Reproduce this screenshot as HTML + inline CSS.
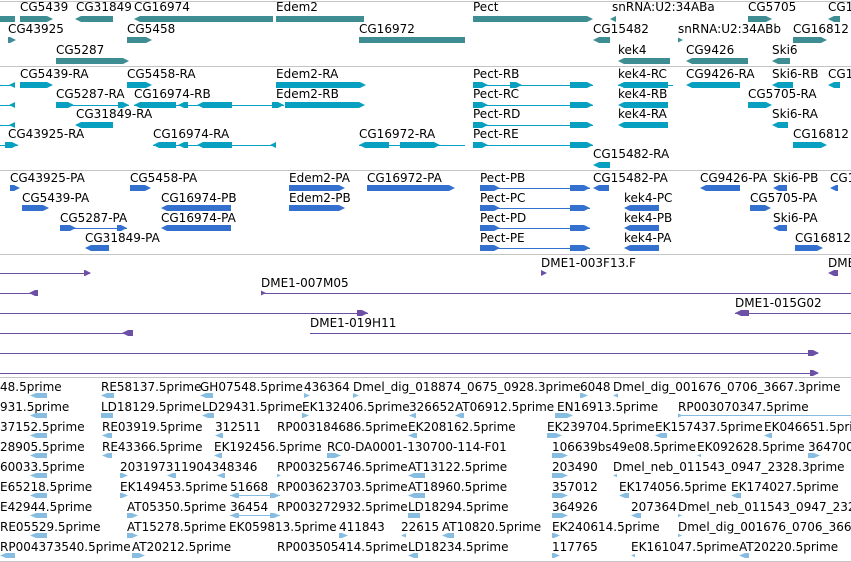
<!DOCTYPE html>
<html><head><meta charset="utf-8"><style>
html,body{margin:0;padding:0;width:851px;height:562px;overflow:hidden;background:#fff;position:relative}
.l{position:absolute;font:12px/14px "DejaVu Sans","Liberation Sans",sans-serif;white-space:nowrap;color:#000}
.s{position:absolute;left:0;width:851px;height:1px;background:#c4c4c4}
.b{position:absolute;height:6px}
.r{clip-path:polygon(0 0,calc(100% - 6px) 0,100% 50%,calc(100% - 6px) 100%,0 100%)}
.f{clip-path:polygon(6px 0,100% 0,100% 100%,6px 100%,0 50%)}
.g{background:#3e8d93}
.t{background:#08a0c1}
.p{background:#3470ce}
.c{background:#6c50a6}
.e{background:#86bde1;height:5px}
.n{position:absolute;height:1px}
</style></head><body>
<div class="s" style="top:1px"></div>
<div class="s" style="top:66px"></div>
<div class="s" style="top:170px"></div>
<div class="s" style="top:254px"></div>
<div class="s" style="top:377px"></div>
<div class="s" style="top:561px"></div>

<!-- genes -->
<div class="l" style="left:20px;top:0">CG5439</div><div class="l" style="left:76px;top:0">CG31849</div><div class="l" style="left:134px;top:0">CG16974</div><div class="l" style="left:276px;top:0">Edem2</div><div class="l" style="left:473px;top:0">Pect</div><div class="l" style="left:612px;top:0">snRNA:U2:34ABa</div><div class="l" style="left:748px;top:0">CG5705</div><div class="l" style="left:828px;top:0">CG1</div>
<div class="b g" style="left:0;top:16px;width:15px"></div><div class="b g r" style="left:20px;top:16px;width:33px"></div><div class="b g f" style="left:75px;top:16px;width:38px"></div><div class="b g f" style="left:134px;top:16px;width:139px"></div><div class="b g" style="left:276px;top:16px;width:88px"></div><div class="b g r" style="left:473px;top:16px;width:120px"></div><div class="b g f" style="left:610px;top:16px;width:6px"></div><div class="b g r" style="left:748px;top:16px;width:24px"></div><div class="b g f" style="left:828px;top:16px;width:12px"></div>
<div class="l" style="left:8px;top:22px">CG43925</div><div class="l" style="left:127px;top:22px">CG5458</div><div class="l" style="left:359px;top:22px">CG16972</div><div class="l" style="left:593px;top:22px">CG15482</div><div class="l" style="left:678px;top:22px">snRNA:U2:34ABb</div><div class="l" style="left:793px;top:22px">CG16812</div>
<div class="b g r" style="left:8px;top:37px;width:8px"></div><div class="b g r" style="left:127px;top:37px;width:25px"></div><div class="b g" style="left:359px;top:37px;width:106px"></div><div class="b g f" style="left:593px;top:37px;width:17px"></div><div class="b g r" style="left:678px;top:37px;width:5px"></div><div class="b g r" style="left:793px;top:37px;width:34px"></div>
<div class="l" style="left:56px;top:43px">CG5287</div><div class="l" style="left:618px;top:43px">kek4</div><div class="l" style="left:686px;top:43px">CG9426</div><div class="l" style="left:772px;top:43px">Ski6</div>
<div class="b g r" style="left:56px;top:58px;width:73px"></div><div class="b g f" style="left:618px;top:58px;width:52px"></div><div class="b g f" style="left:686px;top:58px;width:62px"></div><div class="b g f" style="left:772px;top:58px;width:18px"></div>

<!-- transcripts -->
<div class="l" style="left:20px;top:67px">CG5439-RA</div><div class="l" style="left:127px;top:67px">CG5458-RA</div><div class="l" style="left:276px;top:67px">Edem2-RA</div><div class="l" style="left:473px;top:67px">Pect-RB</div><div class="l" style="left:618px;top:67px">kek4-RC</div><div class="l" style="left:686px;top:67px">CG9426-RA</div><div class="l" style="left:772px;top:67px">Ski6-RB</div><div class="l" style="left:828px;top:67px">CG1</div>
<div class="n t" style="left:0;top:85px;width:15px"></div><div class="b t f" style="left:9px;top:82px;width:6px"></div><div class="b t r" style="left:20px;top:82px;width:33px"></div><div class="b t r" style="left:127px;top:82px;width:25px"></div><div class="b t r" style="left:276px;top:82px;width:90px"></div><div class="n t" style="left:473px;top:85px;width:120px"></div><div class="b t r" style="left:473px;top:82px;width:15px"></div><div class="b t r" style="left:510px;top:82px;width:12px"></div><div class="b t r" style="left:570px;top:82px;width:23px"></div><div class="n t" style="left:618px;top:85px;width:55px"></div><div class="b t f" style="left:618px;top:82px;width:50px"></div><div class="b t f" style="left:686px;top:82px;width:54px"></div><div class="b t f" style="left:772px;top:82px;width:21px"></div><div class="b t f" style="left:828px;top:82px;width:12px"></div>
<div class="l" style="left:56px;top:87px">CG5287-RA</div><div class="l" style="left:134px;top:87px">CG16974-RB</div><div class="l" style="left:276px;top:87px">Edem2-RB</div><div class="l" style="left:473px;top:87px">Pect-RC</div><div class="l" style="left:618px;top:87px">kek4-RB</div><div class="l" style="left:748px;top:87px">CG5705-RA</div>
<div class="n t" style="left:0;top:105px;width:15px"></div><div class="b t f" style="left:9px;top:102px;width:6px"></div><div class="n t" style="left:56px;top:105px;width:73px"></div><div class="b t r" style="left:56px;top:102px;width:18px"></div><div class="b t r" style="left:118px;top:102px;width:11px"></div><div class="n t" style="left:134px;top:105px;width:150px"></div><div class="b t f" style="left:134px;top:102px;width:42px"></div><div class="b t f" style="left:178px;top:102px;width:10px"></div><div class="b t f" style="left:197px;top:102px;width:35px"></div><div class="b t r" style="left:272px;top:102px;width:12px"></div><div class="b t r" style="left:285px;top:102px;width:80px"></div><div class="n t" style="left:473px;top:105px;width:120px"></div><div class="b t r" style="left:473px;top:102px;width:15px"></div><div class="b t r" style="left:570px;top:102px;width:23px"></div><div class="b t f" style="left:618px;top:102px;width:50px"></div><div class="b t r" style="left:748px;top:102px;width:24px"></div>
<div class="l" style="left:76px;top:107px">CG31849-RA</div><div class="l" style="left:473px;top:107px">Pect-RD</div><div class="l" style="left:618px;top:107px">kek4-RA</div><div class="l" style="left:772px;top:107px">Ski6-RA</div>
<div class="n t" style="left:0;top:125px;width:15px"></div><div class="b t f" style="left:9px;top:122px;width:6px"></div><div class="b t f" style="left:75px;top:122px;width:38px"></div><div class="n t" style="left:473px;top:125px;width:120px"></div><div class="b t r" style="left:473px;top:122px;width:15px"></div><div class="b t r" style="left:570px;top:122px;width:23px"></div><div class="b t f" style="left:618px;top:122px;width:50px"></div><div class="b t f" style="left:772px;top:122px;width:16px"></div>
<div class="l" style="left:8px;top:127px">CG43925-RA</div><div class="l" style="left:153px;top:127px">CG16974-RA</div><div class="l" style="left:359px;top:127px">CG16972-RA</div><div class="l" style="left:473px;top:127px">Pect-RE</div><div class="l" style="left:793px;top:127px">CG16812</div>
<div class="n t" style="left:0;top:145px;width:18px"></div><div class="b t r" style="left:5px;top:142px;width:13px"></div><div class="n t" style="left:153px;top:145px;width:123px"></div><div class="b t f" style="left:153px;top:142px;width:23px"></div><div class="b t f" style="left:178px;top:142px;width:10px"></div><div class="b t f" style="left:197px;top:142px;width:35px"></div><div class="b t f" style="left:270px;top:142px;width:6px"></div><div class="n t" style="left:359px;top:145px;width:106px"></div><div class="b t f" style="left:359px;top:142px;width:30px"></div><div class="b t r" style="left:400px;top:142px;width:40px"></div><div class="n t" style="left:473px;top:145px;width:120px"></div><div class="b t r" style="left:473px;top:142px;width:15px"></div><div class="b t r" style="left:570px;top:142px;width:23px"></div><div class="b t r" style="left:793px;top:142px;width:34px"></div>
<div class="l" style="left:593px;top:147px">CG15482-RA</div><div class="b t f" style="left:593px;top:162px;width:17px"></div>

<!-- proteins -->
<div class="l" style="left:10px;top:171px">CG43925-PA</div><div class="l" style="left:130px;top:171px">CG5458-PA</div><div class="l" style="left:289px;top:171px">Edem2-PA</div><div class="l" style="left:367px;top:171px">CG16972-PA</div><div class="l" style="left:480px;top:171px">Pect-PB</div><div class="l" style="left:593px;top:171px">CG15482-PA</div><div class="l" style="left:700px;top:171px">CG9426-PA</div><div class="l" style="left:773px;top:171px">Ski6-PB</div><div class="l" style="left:830px;top:171px">CG1</div>
<div class="b p r" style="left:10px;top:185px;width:10px"></div><div class="b p r" style="left:130px;top:185px;width:21px"></div><div class="b p r" style="left:289px;top:185px;width:56px"></div><div class="b p r" style="left:367px;top:185px;width:88px"></div><div class="n p" style="left:480px;top:188px;width:110px"></div><div class="b p r" style="left:480px;top:185px;width:20px"></div><div class="b p r" style="left:570px;top:185px;width:20px"></div><div class="b p f" style="left:593px;top:185px;width:16px"></div><div class="b p f" style="left:700px;top:185px;width:40px"></div><div class="b p f" style="left:773px;top:185px;width:14px"></div><div class="b p f" style="left:830px;top:185px;width:8px"></div>
<div class="l" style="left:22px;top:191px">CG5439-PA</div><div class="l" style="left:161px;top:191px">CG16974-PB</div><div class="l" style="left:289px;top:191px">Edem2-PB</div><div class="l" style="left:480px;top:191px">Pect-PC</div><div class="l" style="left:624px;top:191px">kek4-PC</div><div class="l" style="left:750px;top:191px">CG5705-PA</div>
<div class="b p r" style="left:22px;top:205px;width:27px"></div><div class="b p f" style="left:161px;top:205px;width:70px"></div><div class="b p r" style="left:289px;top:205px;width:56px"></div><div class="n p" style="left:480px;top:208px;width:110px"></div><div class="b p r" style="left:480px;top:205px;width:20px"></div><div class="b p r" style="left:570px;top:205px;width:20px"></div><div class="b p f" style="left:624px;top:205px;width:35px"></div><div class="b p r" style="left:750px;top:205px;width:21px"></div>
<div class="l" style="left:60px;top:211px">CG5287-PA</div><div class="l" style="left:161px;top:211px">CG16974-PA</div><div class="l" style="left:480px;top:211px">Pect-PD</div><div class="l" style="left:624px;top:211px">kek4-PB</div><div class="l" style="left:773px;top:211px">Ski6-PA</div>
<div class="n p" style="left:60px;top:228px;width:67px"></div><div class="b p r" style="left:60px;top:225px;width:16px"></div><div class="b p r" style="left:117px;top:225px;width:10px"></div><div class="b p f" style="left:161px;top:225px;width:70px"></div><div class="n p" style="left:480px;top:228px;width:110px"></div><div class="b p r" style="left:480px;top:225px;width:20px"></div><div class="b p r" style="left:570px;top:225px;width:20px"></div><div class="b p f" style="left:624px;top:225px;width:35px"></div><div class="b p f" style="left:773px;top:225px;width:14px"></div>
<div class="l" style="left:85px;top:231px">CG31849-PA</div><div class="l" style="left:480px;top:231px">Pect-PE</div><div class="l" style="left:624px;top:231px">kek4-PA</div><div class="l" style="left:795px;top:231px">CG16812</div>
<div class="b p f" style="left:85px;top:245px;width:24px"></div><div class="n p" style="left:480px;top:248px;width:110px"></div><div class="b p r" style="left:480px;top:245px;width:20px"></div><div class="b p r" style="left:570px;top:245px;width:20px"></div><div class="b p f" style="left:624px;top:245px;width:35px"></div><div class="b p r" style="left:795px;top:245px;width:28px"></div>

<!-- clones -->
<div class="l" style="left:541px;top:256px">DME1-003F13.F</div><div class="l" style="left:828px;top:256px">DME1</div>
<div class="l" style="left:261px;top:276px">DME1-007M05</div><div class="l" style="left:735px;top:296px">DME1-015G02</div><div class="l" style="left:310px;top:316px">DME1-019H11</div>
<div class="n c" style="left:0;top:273px;width:90px"></div><div class="b c r" style="left:84px;top:270px;width:7px"></div><div class="b c r" style="left:541px;top:270px;width:6px"></div><div class="b c f" style="left:828px;top:270px;width:10px"></div>
<div class="n c" style="left:0;top:293px;width:38px"></div><div class="b c f" style="left:29px;top:290px;width:9px"></div><div class="n c" style="left:261px;top:293px;width:590px"></div><div class="b c r" style="left:261px;top:290px;width:5px"></div>
<div class="n c" style="left:0;top:313px;width:368px"></div><div class="b c r" style="left:357px;top:310px;width:11px"></div><div class="n c" style="left:735px;top:313px;width:116px"></div><div class="b c f" style="left:735px;top:310px;width:14px"></div>
<div class="n c" style="left:0;top:333px;width:133px"></div><div class="b c f" style="left:122px;top:330px;width:11px"></div><div class="n c" style="left:310px;top:333px;width:541px"></div>
<div class="n c" style="left:0;top:353px;width:818px"></div><div class="b c r" style="left:808px;top:350px;width:11px"></div>
<div class="n c" style="left:0;top:373px;width:818px"></div><div class="b c r" style="left:810px;top:370px;width:9px"></div>

<!-- ESTs -->
<div class="l" style="left:0;top:380px">48.5prime</div><div class="l" style="left:101px;top:380px">RE58137.5prime</div><div class="l" style="left:200px;top:380px">GH07548.5prime</div><div class="l" style="left:304px;top:380px">436364</div><div class="l" style="left:353px;top:380px">Dmel_dig_018874_0675_0928.3prime</div><div class="l" style="left:580px;top:380px">6048</div><div class="l" style="left:613px;top:380px">Dmel_dig_001676_0706_3667.3prime</div>
<div class="b e f" style="left:30px;top:393px;width:17px"></div><div class="b e f" style="left:101px;top:393px;width:13px"></div><div class="b e f" style="left:200px;top:393px;width:13px"></div><div class="b e r" style="left:304px;top:393px;width:6px"></div><div class="b e r" style="left:353px;top:393px;width:6px"></div><div class="b e r" style="left:580px;top:393px;width:8px"></div><div class="b e f" style="left:613px;top:393px;width:5px"></div>
<div class="l" style="left:0;top:400px">931.5prime</div><div class="l" style="left:101px;top:400px">LD18129.5prime</div><div class="l" style="left:202px;top:400px">LD29431.5prime</div><div class="l" style="left:302px;top:400px">EK132406.5prime</div><div class="l" style="left:409px;top:400px">326652</div><div class="l" style="left:455px;top:400px">AT06912.5prime</div><div class="l" style="left:557px;top:400px">EN16913.5prime</div><div class="l" style="left:678px;top:400px">RP003070347.5prime</div>
<div class="b e f" style="left:30px;top:413px;width:17px"></div><div class="b e" style="left:101px;top:413px;width:12px"></div><div class="b e f" style="left:202px;top:413px;width:12px"></div><div class="b e r" style="left:302px;top:413px;width:7px"></div><div class="b e f" style="left:409px;top:413px;width:7px"></div><div class="b e f" style="left:455px;top:413px;width:9px"></div><div class="b e r" style="left:555px;top:413px;width:18px"></div><div class="n e" style="left:678px;top:415px;width:173px;height:1px"></div><div class="b e r" style="left:678px;top:413px;width:5px"></div>
<div class="l" style="left:0;top:420px">37152.5prime</div><div class="l" style="left:102px;top:420px">RE03919.5prime</div><div class="l" style="left:215px;top:420px">312511</div><div class="l" style="left:277px;top:420px">RP003184686.5prime</div><div class="l" style="left:408px;top:420px">EK208162.5prime</div><div class="l" style="left:547px;top:420px">EK239704.5prime</div><div class="l" style="left:655px;top:420px">EK157437.5prime</div><div class="l" style="left:764px;top:420px">EK046651.5prime</div>
<div class="b e f" style="left:30px;top:433px;width:17px"></div><div class="b e f" style="left:102px;top:433px;width:10px"></div><div class="b e f" style="left:215px;top:433px;width:8px"></div><div class="b e f" style="left:408px;top:433px;width:9px"></div><div class="b e r" style="left:547px;top:433px;width:15px"></div><div class="b e f" style="left:655px;top:433px;width:12px"></div><div class="b e f" style="left:764px;top:433px;width:8px"></div>
<div class="l" style="left:0;top:440px">28905.5prime</div><div class="l" style="left:102px;top:440px">RE43366.5prime</div><div class="l" style="left:214px;top:440px">EK192456.5prime</div><div class="l" style="left:327px;top:440px">RC0-DA0001-130700-114-F01</div><div class="l" style="left:552px;top:440px">106639bs49e08.5prime</div><div class="l" style="left:697px;top:440px">EK092628.5prime</div><div class="l" style="left:808px;top:440px">364700</div>
<div class="b e f" style="left:30px;top:453px;width:17px"></div><div class="b e f" style="left:102px;top:453px;width:10px"></div><div class="b e f" style="left:214px;top:453px;width:8px"></div><div class="b e r" style="left:327px;top:453px;width:14px"></div><div class="b e r" style="left:552px;top:453px;width:16px"></div><div class="b e f" style="left:697px;top:453px;width:4px"></div><div class="b e r" style="left:808px;top:453px;width:12px"></div>
<div class="l" style="left:0;top:460px">60033.5prime</div><div class="l" style="left:120px;top:460px">203197311904348346</div><div class="l" style="left:277px;top:460px">RP003256746.5prime</div><div class="l" style="left:408px;top:460px">AT13122.5prime</div><div class="l" style="left:552px;top:460px">203490</div><div class="l" style="left:613px;top:460px">Dmel_neb_011543_0947_2328.3prime</div>
<div class="b e f" style="left:30px;top:473px;width:17px"></div><div class="b e r" style="left:120px;top:473px;width:8px"></div><div class="b e f" style="left:167px;top:473px;width:9px"></div><div class="b e f" style="left:217px;top:473px;width:8px"></div><div class="b e r" style="left:277px;top:473px;width:4px"></div><div class="b e f" style="left:408px;top:473px;width:17px"></div><div class="b e r" style="left:552px;top:473px;width:16px"></div><div class="b e f" style="left:613px;top:473px;width:4px"></div>
<div class="l" style="left:0;top:480px">E65218.5prime</div><div class="l" style="left:120px;top:480px">EK149453.5prime</div><div class="l" style="left:230px;top:480px">51668</div><div class="l" style="left:277px;top:480px">RP003623703.5prime</div><div class="l" style="left:408px;top:480px">AT18960.5prime</div><div class="l" style="left:552px;top:480px">357012</div><div class="l" style="left:619px;top:480px">EK174056.5prime</div><div class="l" style="left:731px;top:480px">EK174027.5prime</div>
<div class="b e f" style="left:30px;top:493px;width:17px"></div><div class="b e r" style="left:120px;top:493px;width:8px"></div><div class="n e" style="left:230px;top:495px;width:50px;height:1px"></div><div class="b e f" style="left:230px;top:493px;width:9px"></div><div class="b e r" style="left:270px;top:493px;width:10px"></div><div class="b e f" style="left:408px;top:493px;width:17px"></div><div class="b e r" style="left:552px;top:493px;width:16px"></div><div class="b e f" style="left:619px;top:493px;width:10px"></div><div class="b e f" style="left:731px;top:493px;width:10px"></div>
<div class="l" style="left:0;top:500px">E42944.5prime</div><div class="l" style="left:127px;top:500px">AT05350.5prime</div><div class="l" style="left:230px;top:500px">36454</div><div class="l" style="left:277px;top:500px">RP003272932.5prime</div><div class="l" style="left:408px;top:500px">LD18294.5prime</div><div class="l" style="left:552px;top:500px">364926</div><div class="l" style="left:631px;top:500px">207364</div><div class="l" style="left:678px;top:500px">Dmel_neb_011543_0947_2328.3prime</div>
<div class="b e f" style="left:30px;top:513px;width:17px"></div><div class="b e r" style="left:127px;top:513px;width:11px"></div><div class="n e" style="left:230px;top:515px;width:50px;height:1px"></div><div class="b e f" style="left:230px;top:513px;width:9px"></div><div class="b e r" style="left:270px;top:513px;width:10px"></div><div class="b e" style="left:408px;top:513px;width:12px"></div><div class="b e r" style="left:552px;top:513px;width:16px"></div><div class="b e f" style="left:631px;top:513px;width:10px"></div><div class="b e r" style="left:678px;top:513px;width:4px"></div>
<div class="l" style="left:0;top:520px">RE05529.5prime</div><div class="l" style="left:127px;top:520px">AT15278.5prime</div><div class="l" style="left:229px;top:520px">EK059813.5prime</div><div class="l" style="left:339px;top:520px">411843</div><div class="l" style="left:401px;top:520px">22615</div><div class="l" style="left:442px;top:520px">AT10820.5prime</div><div class="l" style="left:552px;top:520px">EK240614.5prime</div><div class="l" style="left:678px;top:520px">Dmel_dig_001676_0706_3667.3prime</div>
<div class="b e f" style="left:30px;top:533px;width:17px"></div><div class="b e r" style="left:127px;top:533px;width:11px"></div><div class="b e r" style="left:339px;top:533px;width:9px"></div><div class="b e f" style="left:401px;top:533px;width:5px"></div><div class="b e f" style="left:442px;top:533px;width:12px"></div><div class="b e r" style="left:552px;top:533px;width:8px"></div><div class="b e r" style="left:678px;top:533px;width:4px"></div>
<div class="l" style="left:0;top:540px">RP004373540.5prime</div><div class="l" style="left:132px;top:540px">AT20212.5prime</div><div class="l" style="left:277px;top:540px">RP003505414.5prime</div><div class="l" style="left:408px;top:540px">LD18234.5prime</div><div class="l" style="left:552px;top:540px">117765</div><div class="l" style="left:631px;top:540px">EK161047.5prime</div><div class="l" style="left:739px;top:540px">AT20220.5prime</div>
<div class="b e f" style="left:0;top:553px;width:15px"></div><div class="b e r" style="left:132px;top:553px;width:13px"></div><div class="b e f" style="left:408px;top:553px;width:10px"></div><div class="b e r" style="left:552px;top:553px;width:8px"></div><div class="b e f" style="left:631px;top:553px;width:4px"></div><div class="b e f" style="left:739px;top:553px;width:10px"></div>
</body></html>
